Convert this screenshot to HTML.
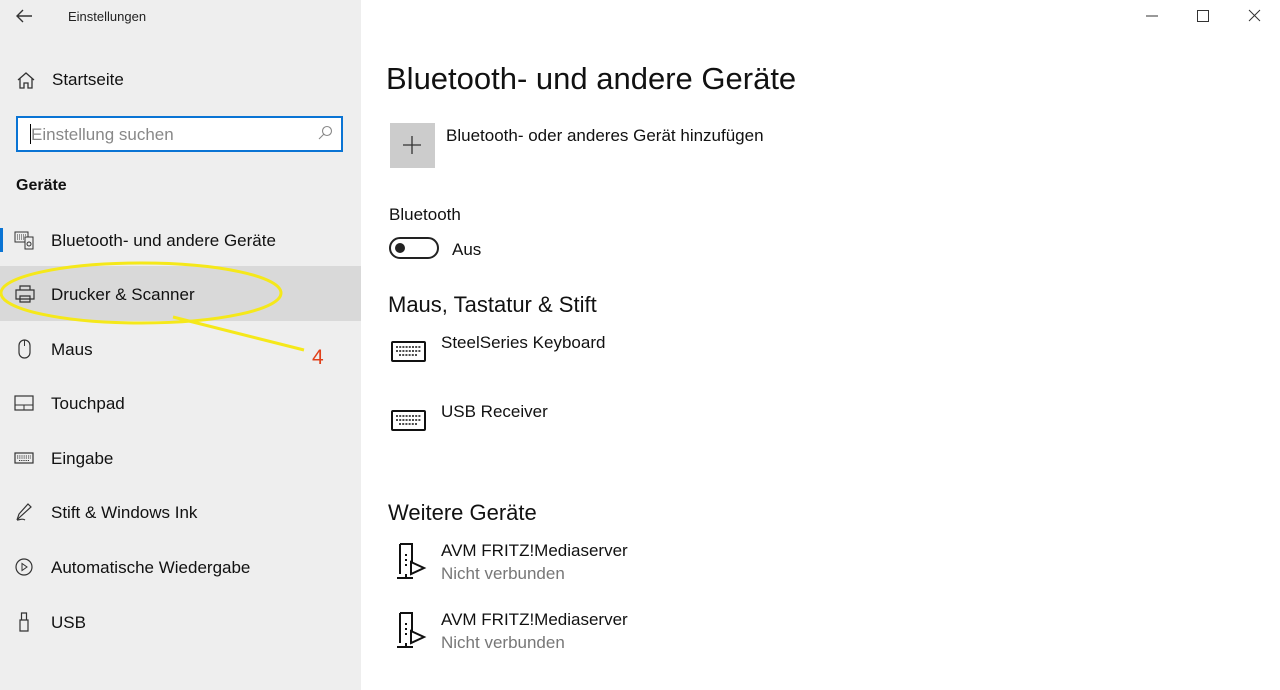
<!DOCTYPE html>
<html><head><meta charset="utf-8"><style>
*{margin:0;padding:0;box-sizing:border-box}
body{width:1280px;height:690px;overflow:hidden;background:#fff;font-family:"Liberation Sans",sans-serif;color:#000;position:relative}
.side{position:absolute;left:0;top:0;width:361px;height:690px;background:#eeeeee}
.t{position:absolute;white-space:nowrap}
.nav{position:absolute;left:0;width:361px;height:55px}
.nav span{position:absolute;left:51px;top:50%;transform:translateY(-45%);font-size:17px;color:#111}
.nav svg{position:absolute;left:14px;top:50%;transform:translateY(-50%)}
</style></head><body>
<div class="side">
<svg style="position:absolute;left:15px;top:8px" width="18" height="16" viewBox="0 0 18 16"><path d="M17 8H2M8 2L2 8l6 6" fill="none" stroke="#333" stroke-width="1.4"/></svg>
<div class="t" style="left:68px;top:9px;font-size:13px;color:#222">Einstellungen</div>
<svg style="position:absolute;left:16px;top:70px" width="20" height="20" viewBox="0 0 20 20"><path d="M2 10L10 3l8 7M4 8.5V18h4v-5h4v5h4V8.5" fill="none" stroke="#333" stroke-width="1.3"/></svg>
<div class="t" style="left:52px;top:70px;font-size:17px;color:#111">Startseite</div>
<div style="position:absolute;left:16px;top:116px;width:327px;height:36px;border:2px solid #0a74d4;background:#fff"></div>
<div style="position:absolute;left:30px;top:124px;width:1px;height:20px;background:#000"></div>
<div class="t" style="left:31px;top:125px;font-size:17px;color:#888">Einstellung suchen</div>
<svg style="position:absolute;left:317px;top:125px" width="16" height="16" viewBox="0 0 16 16"><circle cx="10" cy="6" r="4.5" fill="none" stroke="#888" stroke-width="1.1"/><path d="M7 9L2 14" stroke="#888" stroke-width="1.1"/></svg>
<div class="t" style="left:16px;top:177px;font-size:16px;font-weight:bold;color:#111">Geräte</div>
<div style="position:absolute;left:0;top:228px;width:3px;height:24px;background:#0a74d4"></div>
<div class="nav" style="top:212px"><svg width="22" height="20" viewBox="0 0 22 20"><rect x="1" y="2" width="13" height="10" fill="none" stroke="#333"/><path d="M3 5h9M3 7h9M3 9h9" stroke="#333" stroke-dasharray="1 1"/><rect x="11" y="7" width="8" height="12" fill="#eee" stroke="#333"/><circle cx="15" cy="14" r="2" fill="none" stroke="#333"/></svg><span>Bluetooth- und andere Geräte</span></div>
<div class="nav" style="top:266px;background:#d9d9d9"><svg width="22" height="20" viewBox="0 0 22 20"><path d="M6 6V2h10v4M2 6h18v9H2zM6 12h10v6H6z" fill="none" stroke="#333" stroke-width="1.2"/></svg><span>Drucker &amp; Scanner</span></div>
<div class="nav" style="top:321px"><svg width="22" height="20" viewBox="0 0 22 20"><rect x="5" y="1" width="11" height="18" rx="5.5" fill="none" stroke="#333" stroke-width="1.2"/><path d="M10.5 1v6" stroke="#333"/></svg><span>Maus</span></div>
<div class="nav" style="top:375px"><svg width="22" height="20" viewBox="0 0 22 20"><rect x="1" y="3" width="18" height="14" fill="none" stroke="#333" stroke-width="1.2"/><path d="M1 12h18M10 12v5" stroke="#333"/></svg><span>Touchpad</span></div>
<div class="nav" style="top:430px"><svg width="22" height="20" viewBox="0 0 22 20"><rect x="1" y="5" width="18" height="10" fill="none" stroke="#333" stroke-width="1.2"/><path d="M3 8h14M3 10h14M5 12.5h10" stroke="#333" stroke-dasharray="1.2 1"/></svg><span>Eingabe</span></div>
<div class="nav" style="top:484px"><svg width="22" height="20" viewBox="0 0 22 20"><path d="M3 18l2-6 9-10 3 3-10 9zM3 18c3 0 5-2 8 0" fill="none" stroke="#333" stroke-width="1.2"/></svg><span>Stift &amp; Windows Ink</span></div>
<div class="nav" style="top:539px"><svg width="22" height="20" viewBox="0 0 22 20"><circle cx="10" cy="10" r="8" fill="none" stroke="#333" stroke-width="1.2"/><path d="M8 6.5v7l5-3.5z" fill="none" stroke="#333"/></svg><span>Automatische Wiedergabe</span></div>
<div class="nav" style="top:594px"><svg width="22" height="20" viewBox="0 0 22 20"><path d="M6 8h8v11H6zM7.5 1h5v7h-5z" fill="none" stroke="#333" stroke-width="1.2"/></svg><span>USB</span></div>
</div>
<svg style="position:absolute;left:0;top:0" width="361" height="380" viewBox="0 0 361 380">
<ellipse cx="141" cy="293" rx="140" ry="30" fill="none" stroke="#f5e81a" stroke-width="3"/>
<path d="M173 317L304 350" stroke="#f5e81a" stroke-width="3"/>
<text x="312" y="364" font-family="Liberation Sans" font-size="21" fill="#e0401a">4</text>
</svg>
<svg style="position:absolute;left:1145px;top:9px" width="125" height="14" viewBox="0 0 125 14"><path d="M1 7h12" stroke="#333"/><rect x="52.5" y="1.5" width="11" height="11" fill="none" stroke="#333"/><path d="M104 1l11 11M115 1L104 12" stroke="#333"/></svg>
<div class="t" style="left:386px;top:61px;font-size:31px;color:#111">Bluetooth- und andere Geräte</div>
<div style="position:absolute;left:390px;top:123px;width:45px;height:45px;background:#cccccc"></div>
<svg style="position:absolute;left:402px;top:135px" width="20" height="20"><path d="M10 1v18M1 10h18" stroke="#333" stroke-width="1.3"/></svg>
<div class="t" style="left:446px;top:126px;font-size:17px;color:#111">Bluetooth- oder anderes Gerät hinzufügen</div>
<div class="t" style="left:389px;top:205px;font-size:17px;color:#111">Bluetooth</div>
<div style="position:absolute;left:389px;top:237px;width:50px;height:22px;border:2px solid #222;border-radius:11px"></div>
<div style="position:absolute;left:395px;top:243px;width:10px;height:10px;border-radius:50%;background:#222"></div>
<div class="t" style="left:452px;top:240px;font-size:17px;color:#111">Aus</div>
<div class="t" style="left:388px;top:292px;font-size:22px;color:#111">Maus, Tastatur &amp; Stift</div>
<svg style="position:absolute;left:391px;top:340px" width="36" height="24" viewBox="0 0 36 24"><rect x="1" y="2" width="33" height="19" rx="1" fill="none" stroke="#111" stroke-width="2"/><path d="M5 7h25M5 11h25M8 15h19" stroke="#111" stroke-width="1.6" stroke-dasharray="2 1.2"/></svg>
<div class="t" style="left:441px;top:333px;font-size:17px;color:#111">SteelSeries Keyboard</div>
<svg style="position:absolute;left:391px;top:409px" width="36" height="24" viewBox="0 0 36 24"><rect x="1" y="2" width="33" height="19" rx="1" fill="none" stroke="#111" stroke-width="2"/><path d="M5 7h25M5 11h25M8 15h19" stroke="#111" stroke-width="1.6" stroke-dasharray="2 1.2"/></svg>
<div class="t" style="left:441px;top:402px;font-size:17px;color:#111">USB Receiver</div>
<div class="t" style="left:388px;top:500px;font-size:22px;color:#111">Weitere Geräte</div>
<svg style="position:absolute;left:396px;top:542px" width="32" height="38" viewBox="0 0 32 38"><path d="M4 2h12v30M4 2v30M1 36h16M10 32v4" fill="none" stroke="#111" stroke-width="2"/><path d="M10 12v2M10 17v2M10 22v2" stroke="#111" stroke-width="2"/><path d="M15 20l13 6-13 6z" fill="#fff" stroke="#111" stroke-width="2"/></svg>
<div class="t" style="left:441px;top:541px;font-size:17px;color:#111">AVM FRITZ!Mediaserver</div>
<div class="t" style="left:441px;top:564px;font-size:17px;color:#777">Nicht verbunden</div>
<svg style="position:absolute;left:396px;top:611px" width="32" height="38" viewBox="0 0 32 38"><path d="M4 2h12v30M4 2v30M1 36h16M10 32v4" fill="none" stroke="#111" stroke-width="2"/><path d="M10 12v2M10 17v2M10 22v2" stroke="#111" stroke-width="2"/><path d="M15 20l13 6-13 6z" fill="#fff" stroke="#111" stroke-width="2"/></svg>
<div class="t" style="left:441px;top:610px;font-size:17px;color:#111">AVM FRITZ!Mediaserver</div>
<div class="t" style="left:441px;top:633px;font-size:17px;color:#777">Nicht verbunden</div>
</body></html>
